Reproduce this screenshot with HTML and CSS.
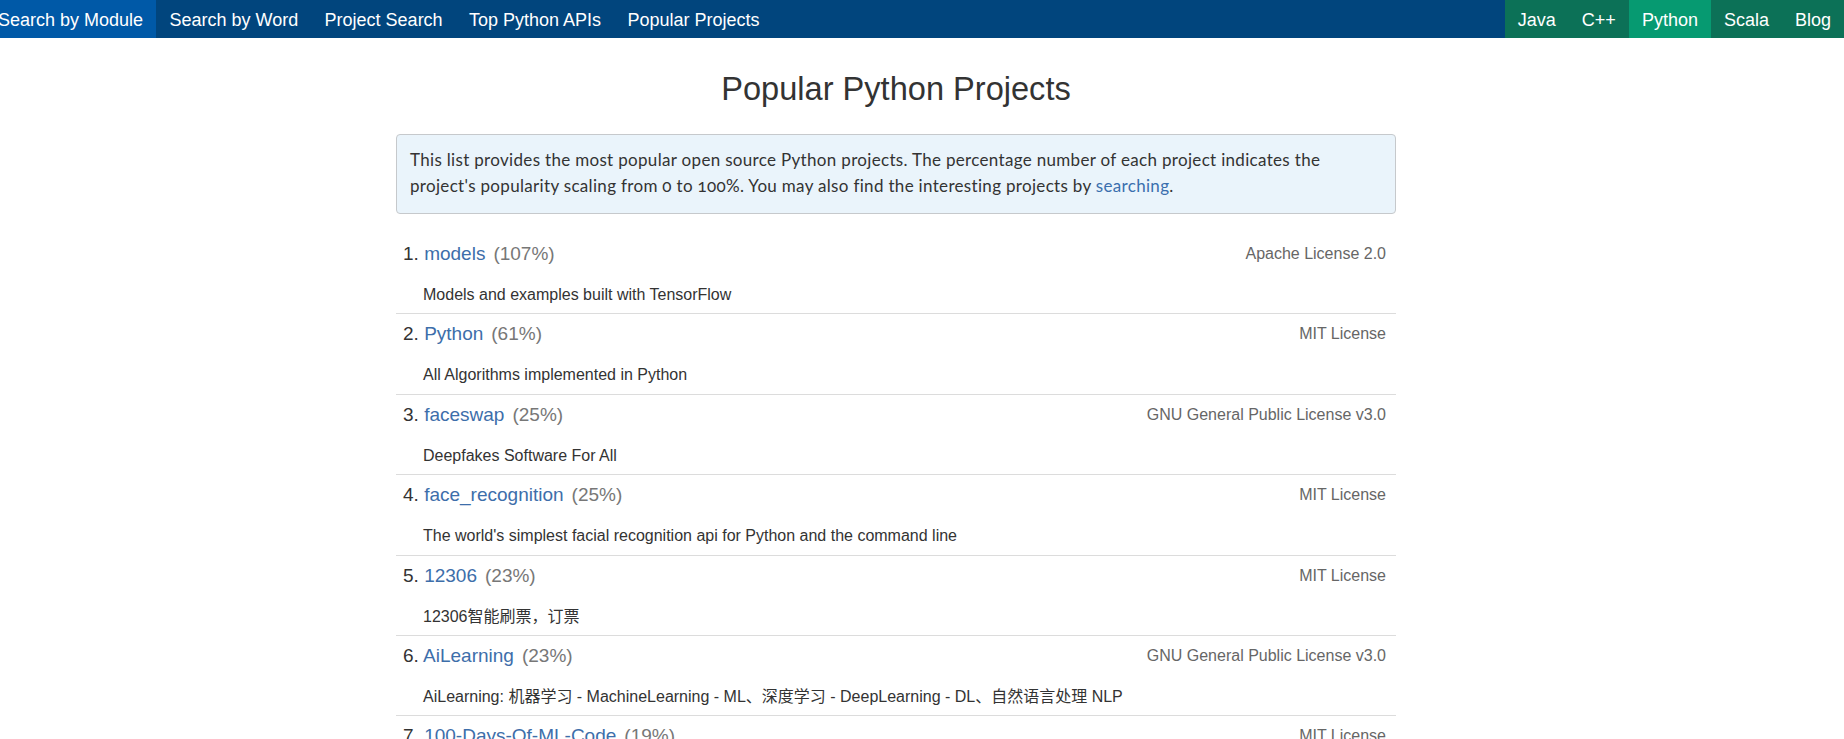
FILE: index.html
```html
<!DOCTYPE html>
<html lang="en">
<head>
<meta charset="utf-8">
<title>Popular Python Projects</title>
<link rel="stylesheet" href="styles.css">
</head>
<body>
<nav class="topbar">
  <ul class="nav nav-left">
    <li class="active"><a href="#">Search by Module</a></li>
    <li><a href="#">Search by Word</a></li>
    <li><a href="#">Project Search</a></li>
    <li><a href="#">Top Python APIs</a></li>
    <li><a href="#">Popular Projects</a></li>
  </ul>
  <ul class="nav nav-right">
    <li><a href="#">Java</a></li>
    <li><a href="#">C++</a></li>
    <li class="current"><a href="#">Python</a></li>
    <li><a href="#">Scala</a></li>
    <li><a href="#">Blog</a></li>
  </ul>
</nav>

<main class="page">
  <h1 class="title">Popular Python Projects</h1>
  <div class="info">This list provides the most popular open source Python projects. The percentage number of each project indicates the project's popularity scaling from 0 to 100%. You may also find the interesting projects by <a href="#">searching</a>.</div>

  <ol class="projects">
    <li class="project">
      <div class="head"><span class="name"><span class="num">1.</span> <a href="#">models</a><span class="pct">(107%)</span></span><span class="license">Apache License 2.0</span></div>
      <p class="desc">Models and examples built with TensorFlow</p>
    </li>
    <li class="project">
      <div class="head"><span class="name"><span class="num">2.</span> <a href="#">Python</a><span class="pct">(61%)</span></span><span class="license">MIT License</span></div>
      <p class="desc">All Algorithms implemented in Python</p>
    </li>
    <li class="project">
      <div class="head"><span class="name"><span class="num">3.</span> <a href="#">faceswap</a><span class="pct">(25%)</span></span><span class="license">GNU General Public License v3.0</span></div>
      <p class="desc">Deepfakes Software For All</p>
    </li>
    <li class="project">
      <div class="head"><span class="name"><span class="num">4.</span> <a href="#">face_recognition</a><span class="pct">(25%)</span></span><span class="license">MIT License</span></div>
      <p class="desc">The world's simplest facial recognition api for Python and the command line</p>
    </li>
    <li class="project">
      <div class="head"><span class="name"><span class="num">5.</span> <a href="#">12306</a><span class="pct">(23%)</span></span><span class="license">MIT License</span></div>
      <p class="desc">12306智能刷票，订票</p>
    </li>
    <li class="project">
      <div class="head"><span class="name"><span class="num">6.</span> <a href="#">AiLearning</a><span class="pct">(23%)</span></span><span class="license">GNU General Public License v3.0</span></div>
      <p class="desc">AiLearning: 机器学习 - MachineLearning - ML、深度学习 - DeepLearning - DL、自然语言处理 NLP</p>
    </li>
    <li class="project">
      <div class="head"><span class="name"><span class="num">7.</span> <a href="#">100-Days-Of-ML-Code</a><span class="pct">(19%)</span></span><span class="license">MIT License</span></div>
      <p class="desc">100 Days of ML Coding</p>
    </li>
  </ol>
</main>
</body>
</html>
```

FILE: styles.css
```css
html, body {
  margin: 0;
  padding: 0;
  background: #fff;
}

body {
  font-family: "Liberation Sans", Arial, "Noto Sans CJK SC", sans-serif;
  color: #333;
  overflow: hidden;
}

a {
  text-decoration: none;
}

.topbar {
  display: flex;
  justify-content: space-between;
  background: #01457d;
  height: 38px;
  font-size: 18px;
  line-height: 36px;
}

.nav {
  display: flex;
  list-style: none;
  margin: 0;
  padding: 0;
}

.nav-left {
  margin-left: -15px;
}

.nav li a {
  display: block;
  height: 36px;
  padding: 2px 13.2px 0;
  color: #fff;
}

.nav-left .active a {
  background: #0059a7;
  padding-left: 13px;
}

.nav-right {
  background: #0c7157;
}

.nav-right li a {
  padding-left: 13px;
  padding-right: 13px;
}

.nav-right .current a {
  background: #069a71;
}

.page {
  width: 1000px;
  margin-left: calc(50% - 526px);
}

.title {
  margin: 33px 0 28px;
  font-size: 32.6px;
  font-weight: normal;
  line-height: 35px;
  text-align: center;
  color: #333;
}

.info {
  background: #eaf4fb;
  border: 1px solid #c6c9cc;
  border-radius: 4px;
  padding: 12px 13px 14px;
  font-family: Lato, "Open Sans", sans-serif;
  font-size: 17px;
  letter-spacing: 0.32px;
  font-variant-numeric: oldstyle-nums;
  line-height: 26px;
  color: #333;
}

.info a {
  color: #3a6fae;
}

.projects {
  list-style: none;
  margin: 20px 0 0;
  padding: 0;
}

.project {
  border-bottom: 1px solid #dcdcdc;
  padding: 7px 10px 7.4px 7px;
}

.head {
  display: flex;
  justify-content: space-between;
  align-items: flex-start;
}

.name {
  font-size: 19px;
  line-height: 26px;
  color: #333;
}

.name a {
  color: #3d6eaa;
}

.pct {
  color: #777;
  margin-left: 8px;
}

.license {
  font-size: 16px;
  line-height: 26px;
  color: #666;
}

.desc {
  margin: 17px 0 0 20px;
  font-size: 16px;
  line-height: 22px;
  color: #333;
}
```
